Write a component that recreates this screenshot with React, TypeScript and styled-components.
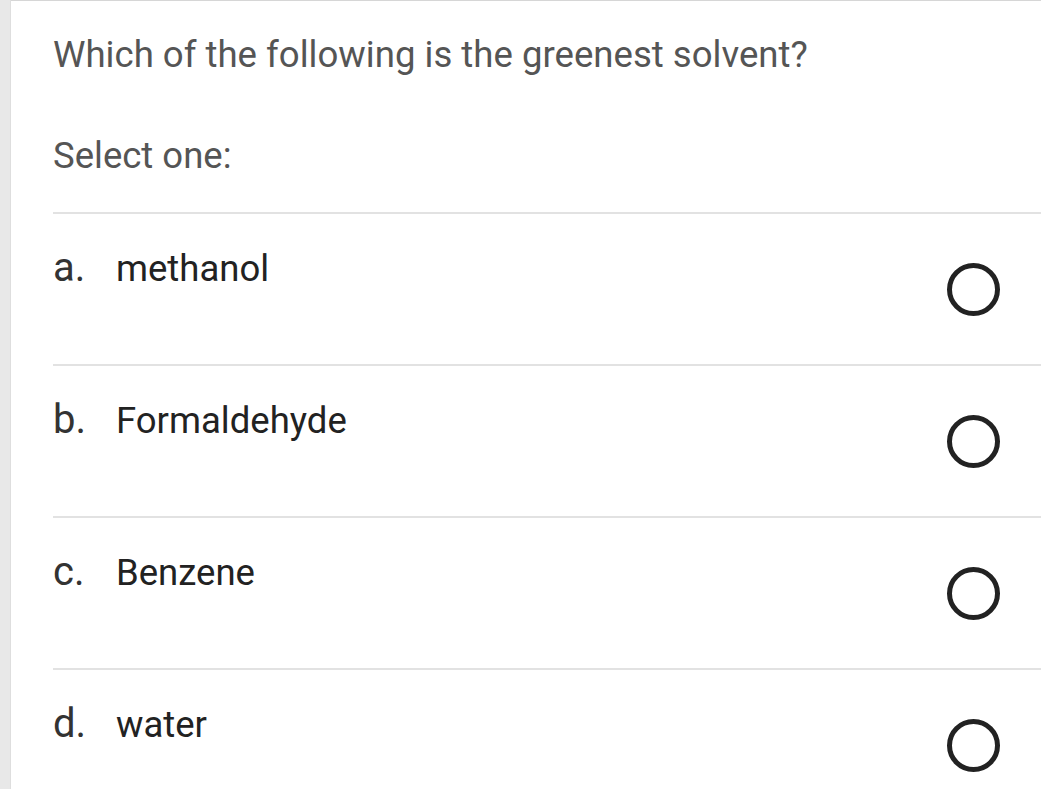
import React from "react";
import styled, { createGlobalStyle } from "styled-components";

const Global = createGlobalStyle`
  html, body { margin: 0; padding: 0; background: #ffffff; }
  body { font-family: Roboto, "Liberation Sans", Arial, sans-serif; }
`;

const Page = styled.div`
  display: flex;
  width: 1041px;
  height: 789px;
  overflow: hidden;
  background: #ffffff;
`;

const Strip = styled.div`
  width: 10px;
  flex: none;
  background: #e8e8e8;
  border-right: 1px solid #dedede;
`;

const Main = styled.div`
  flex: 1;
  border-top: 1px solid #d6d6d6;
  padding-left: 42px;
  display: flex;
  flex-direction: column;
`;

const Question = styled.div`
  margin-top: 32px;
  font-size: 36.6px;
  line-height: 43px;
  color: #555555;
  white-space: nowrap;
`;

const Prompt = styled.div`
  margin-top: 58px;
  font-size: 36.5px;
  line-height: 43px;
  color: #555555;
`;

const Options = styled.div`
  margin-top: 35px;
  display: flex;
  flex-direction: column;
`;

const Option = styled.label`
  display: flex;
  align-items: center;
  border-top: 2px solid #e2e2e2;
  height: 150px;
`;

const Label = styled.div`
  align-self: flex-start;
  margin-top: 32px;
  display: flex;
  align-items: baseline;
  font-size: 36.5px;
  line-height: 43px;
  color: #222222;
  flex: 1;
`;

const Letter = styled.span`
  width: 63px;
  font-size: 40px;
  color: #333333;
`;

const Radio = styled.span`
  width: 43px;
  height: 43px;
  border: 5px solid #222222;
  border-radius: 50%;
  margin-right: 41px;
  flex: none;
`;

const options = [
  ["a.", "methanol"],
  ["b.", "Formaldehyde"],
  ["c.", "Benzene"],
  ["d.", "water"],
];

export default function App() {
  return (
    <>
      <Global />
      <Page>
        <Strip />
        <Main>
          <Question>Which of the following is the greenest solvent?</Question>
          <Prompt>Select one:</Prompt>
          <Options>
            {options.map(([l, t]) => (
              <Option key={l}>
                <Label>
                  <Letter>{l}</Letter>
                  <span>{t}</span>
                </Label>
                <Radio />
              </Option>
            ))}
          </Options>
        </Main>
      </Page>
    </>
  );
}
